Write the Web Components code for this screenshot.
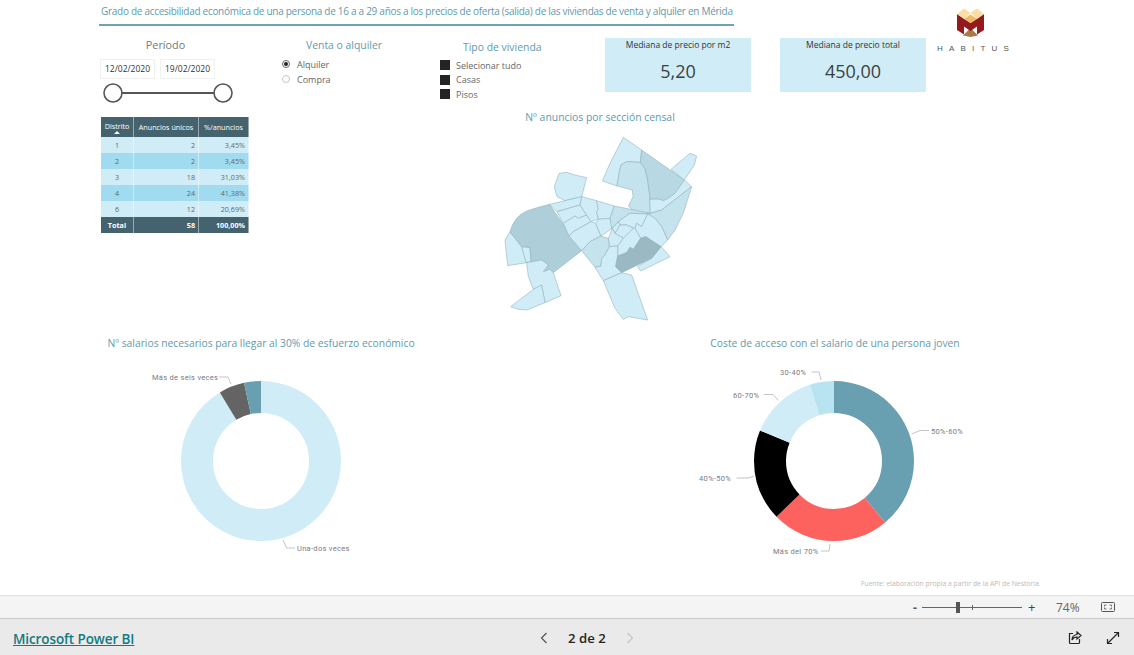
<!DOCTYPE html>
<html lang="es">
<head>
<meta charset="utf-8">
<title>Habitus</title>
<style>
  html, body { margin: 0; padding: 0; background: #fff; }
  body { font-family: "Open Sans", "Liberation Sans", sans-serif; width: 1134px; height: 655px; overflow: hidden; }
</style>
</head>
<body>
<report-page>
  <report-header slot="top"></report-header>
  <report-middle slot="middle"></report-middle>
  <report-charts slot="bottom"></report-charts>
</report-page>
<zoom-bar></zoom-bar>
<pbi-footer></pbi-footer>

<script>
class ReportPage extends HTMLElement {
  connectedCallback() {
    this.attachShadow({ mode: 'open' });
    this.shadowRoot.innerHTML = `
      <style>
        :host { display: flex; flex-direction: column; height: 595px; background: #fff; box-sizing: border-box; }
      </style>
      <slot name="top"></slot>
      <slot name="middle"></slot>
      <slot name="bottom"></slot>
    `;
  }
}

class ReportHeader extends HTMLElement {
  connectedCallback() {
    this.attachShadow({ mode: 'open' });
    this.shadowRoot.innerHTML = `
      <style>
        :host { display: flex; height: 110px; padding-left: 99px; box-sizing: border-box; }
        .left { width: 827px; }
        .title { width: 635px; height: 26px; box-sizing: border-box; border-bottom: 2px solid #6fa3b4; padding: 3px 0 0 2px; font-size: 10px; line-height: 16px; color: #5f9aad; letter-spacing: -0.285px; white-space: nowrap; }
        .controls { display: flex; align-items: flex-start; margin-top: 12px; }
        logo-habitus { margin: 8px 0 0 7px; }
      </style>
      <div class="left">
        <div class="title">Grado de accesibilidad económica de una persona de 16 a a 29 años a los precios de oferta (salida) de las viviendas de venta y alquiler en Mérida</div>
        <div class="controls">
          <period-slicer></period-slicer>
          <radio-slicer></radio-slicer>
          <check-slicer></check-slicer>
          <kpi-card label="Mediana de precio por m2" value="5,20"></kpi-card>
          <kpi-card label="Mediana de precio total" value="450,00" style="margin-left:29px"></kpi-card>
        </div>
      </div>
      <logo-habitus></logo-habitus>
    `;
  }
}

class PeriodSlicer extends HTMLElement {
  connectedCallback() {
    this.attachShadow({ mode: 'open' });
    this.shadowRoot.innerHTML = `
      <style>
        :host { display: block; width: 135px; margin-left: 1px; color: #666; }
        .head { text-align: center; font-size: 10.8px; line-height: 15px; color: #6f7c80; margin: -1px 4px 0 0; }
        .dates { display: flex; gap: 5px; margin-top: 7px; }
        .dates span { width: 55px; height: 20px; box-sizing: border-box; border: 1px solid #f1f1f1; font-size: 8.5px; line-height: 18px; color: #333; text-align: center; }
        svg { display: block; margin-top: 3px; margin-left: 3px; }
      </style>
      <div class="head">Período</div>
      <div class="dates"><span>12/02/2020</span><span>19/02/2020</span></div>
      <svg width="130" height="22" viewBox="0 0 130 22">
        <line x1="10" y1="11" x2="120" y2="11" stroke="#555" stroke-width="2"/>
        <circle cx="10" cy="11" r="9" fill="#fff" stroke="#555" stroke-width="1.6"/>
        <circle cx="120" cy="11" r="9" fill="#fff" stroke="#555" stroke-width="1.6"/>
      </svg>
    `;
  }
}

class RadioSlicer extends HTMLElement {
  connectedCallback() {
    this.attachShadow({ mode: 'open' });
    this.shadowRoot.innerHTML = `
      <style>
        :host { display: block; width: 157px; margin-left: 47px; }
        .head { font-size: 10.4px; line-height: 15px; color: #5f9aad; margin: 0 0 0 24px; white-space: nowrap; }
        .row { display: flex; align-items: center; height: 15px; font-size: 9px; color: #666; gap: 7px; }
        .rows { margin-top: 4px; }
        .dot { width: 8px; height: 8px; box-sizing: border-box; border: 1px solid #c6c6c6; border-radius: 50%; margin-top: -2px; position: relative; }
        .dot.on { border-color: #666; }
        .dot.on::after { content: ""; position: absolute; left: 1px; top: 1px; width: 4px; height: 4px; border-radius: 50%; background: #222; }
      </style>
      <div class="head">Venta o alquiler</div>
      <div class="rows">
        <div class="row"><i class="dot on"></i>Alquiler</div>
        <div class="row"><i class="dot"></i>Compra</div>
      </div>
    `;
  }
}

class CheckSlicer extends HTMLElement {
  connectedCallback() {
    this.attachShadow({ mode: 'open' });
    this.shadowRoot.innerHTML = `
      <style>
        :host { display: block; width: 165px; margin-left: 1px; }
        .head { font-size: 10.4px; line-height: 15px; color: #5f9aad; margin: 2px 0 0 23px; white-space: nowrap; }
        .rows { margin-top: 3px; }
        .row { display: flex; align-items: center; height: 14.5px; font-size: 9px; color: #666; gap: 6px; }
        b { width: 10px; height: 10px; background: #252423; display: block; }
      </style>
      <div class="head">Tipo de vivienda</div>
      <div class="rows">
        <div class="row"><b></b>Selecionar tudo</div>
        <div class="row"><b></b>Casas</div>
        <div class="row"><b></b>Pisos</div>
      </div>
    `;
  }
}

class KpiCard extends HTMLElement {
  connectedCallback() {
    this.attachShadow({ mode: 'open' });
    this.shadowRoot.innerHTML = `
      <style>
        :host { display: block; width: 146px; height: 54px; background: #d0edf7; text-align: center; color: #333; }
        .l { font-size: 8.5px; line-height: 14px; }
        .v { font-size: 18px; line-height: 26px; margin-top: 6px; color: #3a3f44; }
      </style>
      <div class="l">${this.getAttribute('label')}</div>
      <div class="v">${this.getAttribute('value')}</div>
    `;
  }
}

class LogoHabitus extends HTMLElement {
  connectedCallback() {
    this.attachShadow({ mode: 'open' });
    this.shadowRoot.innerHTML = `
      <style>
        :host { display: block; width: 82px; }
        svg { display: block; margin-left: 24px; }
        .t { font-family: "Liberation Sans", sans-serif; font-size: 8px; line-height: 10px; letter-spacing: 6.2px; color: #555; margin: 7px 0 0 1px; white-space: nowrap; padding-left: 3px; }
      </style>
      <svg width="27" height="29" viewBox="0 0 27 29">
        <polygon points="13.5,20 21,27.5 13.5,29 6,27.5" fill="#a9794c"/>
        <polygon points="0,6 13.5,15 27,6 27,22 20,26.5 20,18.5 13.5,23 7,18.5 7,26.5 0,22" fill="#96191d"/>
        <polygon points="0,6 7,.5 13.5,5 7,11" fill="#f9dfa3"/>
        <polygon points="13.5,5 20,.5 27,6 20,11" fill="#f9dfa3"/>
        <polygon points="7,11 13.5,6.5 20,11 13.5,15" fill="#f0b968"/>
      </svg>
      <div class="t">HABITUS</div>
    `;
  }
}

class ReportMiddle extends HTMLElement {
  connectedCallback() {
    this.attachShadow({ mode: 'open' });
    this.shadowRoot.innerHTML = `
      <style>
        :host { display: flex; height: 225px; padding: 7px 0 0 101px; box-sizing: border-box; }
        census-map { margin: 0 0 0 246px; }
      </style>
      <data-table></data-table>
      <census-map></census-map>
    `;
  }
}

class DataTable extends HTMLElement {
  connectedCallback() {
    const rows = [['1','2','3,45%'],['2','2','3,45%'],['3','18','31,03%'],['4','24','41,38%'],['6','12','20,69%']];
    this.attachShadow({ mode: 'open' });
    this.shadowRoot.innerHTML = `
      <style>
        :host { display: block; width: 148px; height: 116px; font-size: 7.2px; color: #666; }
        .g { display: grid; grid-template-columns: 33px 65px 50px; grid-template-rows: 20px repeat(5, 16px) 16px; }
        .g > div { box-sizing: border-box; padding: 0 3px; display: flex; align-items: center; justify-content: flex-end; white-space: nowrap; border-right: 1px solid rgba(255,255,255,.45); }
        .g > div:nth-child(3n+1) { justify-content: center; }
        .h { background: #44636f; color: #fff; }
        .h:nth-child(-n+3) { justify-content: center !important; line-height: 8px; }
        .d { flex-direction: column; padding-top: 2px !important; }
        .d::after { content: ""; border: 3px solid transparent; border-bottom: 3px solid #fff; border-top: 0; margin-top: 1px; }
        .a { background: #d0edf7; }
        .b { background: #a0dbef; }
        .t { background: #44636f; color: #fff; font-weight: 700; }
      </style>
      <div class="g">
        <div class="h d">Distrito</div><div class="h">Anuncios únicos</div><div class="h">%/anuncios</div>
        ${rows.map((r, i) => r.map(c => `<div class="${i % 2 ? 'b' : 'a'}">${c}</div>`).join('')).join('')}
        <div class="t">Total</div><div class="t">58</div><div class="t">100,00%</div>
      </div>
    `;
  }
}

class CensusMap extends HTMLElement {
  connectedCallback() {
    const L = '#d0edf7', M = '#c4e3ec', D = '#b8d9e3', W = '#aecfd9', K = '#9ab9c3';
    const shapes = [
      [L,'385,22 440,60 436,97 395,95 378,105 372,130 366,168 322,153 345,100'],
      [M,'436,97 395,95 378,105 372,130 366,168 412,180 414,200 400,228 420,245 466,250 464,200 458,150 450,115'],
      [D,'440,60 568,150 540,190 520,205 505,212 490,207 466,208 458,150 450,115 436,97'],
      [L,'528,118 585,70 605,78 598,105 568,150'],
      [L,'192,130 215,127 240,135 275,143 260,200 210,212 186,200 178,170'],
      [L,'466,250 464,208 490,207 505,212 520,205 540,190 568,150 590,170 500,240'],
      [L,'45,305 80,350 95,398 38,407 30,330'],
      [L,'80,350 105,352 108,395 93,397'],
      [W,'163,223 260,362 175,428 165,418 145,425 160,405 140,390 108,395 105,352 80,350 45,305 52,285 65,265 78,253 95,243 120,235'],
      [L,'95,398 140,390 160,405 145,425 165,418 175,428 198,497 150,518 140,465 115,478 100,440'],
      [L,'140,465 150,518 95,540 70,538 47,530 115,478'],
      [L,'163,223 210,212 260,200 255,225 186,245'],
      [L,'186,245 255,225 275,255 250,265 240,258 205,280'],
      [L,'205,280 240,258 250,265 275,255 288,275 235,305 222,318'],
      [L,'222,318 235,305 288,275 302,280 318,318 285,335 260,362'],
      [L,'260,200 305,212 310,240 305,245 310,268 288,275 275,255 255,225'],
      [L,'305,212 358,228 345,265 310,268 305,245 310,240'],
      [L,'310,268 345,265 352,295 318,318 302,280'],
      [M,'358,228 466,250 405,250 370,275 350,295 345,265'],
      [L,'405,250 458,252 440,290 425,280 420,295 395,285 375,285 370,275'],
      [L,'370,275 375,285 360,310 352,295'],
      [L,'375,285 395,285 415,295 385,325 360,310'],
      [L,'352,295 360,310 385,325 368,348 343,350 340,325'],
      [M,'318,318 340,325 343,350 330,375 320,385 318,408 300,412 260,362 285,335'],
      [M,'458,252 466,250 500,240 590,170 565,250 540,300 518,330 500,290 480,265'],
      [L,'420,295 425,280 440,290 458,252 480,265 500,290 518,330 498,350 452,320 437,325'],
      [L,'470,385 498,350 525,380 437,423 427,410'],
      [L,'415,295 420,295 437,325 415,358 405,352 395,368 368,378 368,348 385,325'],
      [L,'343,350 368,348 368,378 362,410 380,428 325,452 300,412 318,408 320,385 330,375'],
      [K,'452,320 498,350 470,385 380,428 362,410 368,378 395,368 405,352 415,358 437,325'],
      [L,'325,452 380,428 410,435 458,570 400,560 385,568 360,535']
    ];
    this.attachShadow({ mode: 'open' });
    this.shadowRoot.innerHTML = `
      <style>
        :host { display: block; width: 210px; }
        .head { text-align: center; font-size: 10.4px; line-height: 14px; color: #5f9aad; white-space: nowrap; margin-top: -7px; }
        svg { display: block; margin-top: 6px; }
      </style>
      <div class="head">Nº anuncios por sección censal</div>
      <svg width="210" height="195" viewBox="0 0 630 585">
        ${shapes.map(s => `<polygon points="${s[1]}" fill="${s[0]}" stroke="#8fb0bb" stroke-width="1.7" stroke-linejoin="round"/>`).join('')}
      </svg>
    `;
  }
}

class ReportCharts extends HTMLElement {
  connectedCallback() {
    this.attachShadow({ mode: 'open' });
    this.shadowRoot.innerHTML = `
      <style>
        :host { display: flex; flex-wrap: wrap; height: 260px; padding-left: 91px; box-sizing: border-box; }
        .foot { width: 100%; box-sizing: border-box; padding-left: 770px; font-size: 6.8px; line-height: 10px; color: #bdbab6; white-space: nowrap; margin-top: -14px; }
        donut-left { margin-right: 259px; }
      </style>
      <donut-left></donut-left>
      <donut-right></donut-right>
      <div class="foot">Fuente: elaboración propia a partir de  la API de Nestoria.</div>
    `;
  }
}

// dash segments on a circle with pathLength 360, angles clockwise from the top
const ring = (cx, cy, parts) => parts.map(([a, b, c]) =>
  `<circle cx="${cx}" cy="${cy}" r="64" fill="none" stroke="${c}" stroke-width="32" pathLength="360" stroke-dasharray="${b - a} ${360 - b + a}" stroke-dashoffset="${-a}" transform="rotate(-90 ${cx} ${cy})"/>`
).join('');

const chartCss = `
  :host { display: block; }
  .head { text-align: center; font-size: 10.3px; line-height: 14px; color: #5f9aad; white-space: nowrap; }
  svg { display: block; }
  text { font-family: Roboto, "Liberation Sans", sans-serif; font-size: 7.5px; letter-spacing: .3px; fill: #7d7a80; }
  polyline { fill: none; stroke: #c4c4c4; stroke-width: 1; }
`;

class DonutLeft extends HTMLElement {
  connectedCallback() {
    this.attachShadow({ mode: 'open' });
    this.shadowRoot.innerHTML = `
      <style>${chartCss} :host { width: 340px; padding-top: 1px; }</style>
      <div class="head">Nº salarios necesarios para llegar al 30% de esfuerzo económico</div>
      <svg width="340" height="240" viewBox="0 0 340 240">
        ${ring(170, 111, [[0, 329, '#d0edf7'], [329, 347.7, '#646464'], [347.7, 360, '#689fb1']])}
        <polyline points="128,27 137,27 140,34"/>
        <polyline points="192,190 195.7,198 204,198"/>
        <text x="61" y="30">Más de seis veces</text>
        <text x="206" y="201">Una-dos veces</text>
      </svg>
    `;
  }
}

class DonutRight extends HTMLElement {
  connectedCallback() {
    this.attachShadow({ mode: 'open' });
    this.shadowRoot.innerHTML = `
      <style>${chartCss} :host { width: 290px; padding-top: 1px; }</style>
      <div class="head">Coste de acceso con el salario de una persona joven</div>
      <svg width="290" height="240" viewBox="0 0 290 240">
        ${ring(144, 111, [[0, 140.3, '#689fb1'], [140.3, 225.9, '#fd625e'], [225.9, 292.4, '#000'], [292.4, 342.3, '#d0edf7'], [342.3, 360, '#b8e3f0']])}
        <polyline points="221.5,84 230,80.5 239,80.5"/>
        <polyline points="46.5,128 58,128 64,126"/>
        <polyline points="74,44.5 83,44.5 88.5,50.5"/>
        <polyline points="121.5,22 129,22 131,30"/>
        <polyline points="131,201 139,201 140,194"/>
        <text x="241" y="84">50%-60%</text>
        <text x="9" y="131">40%-50%</text>
        <text x="43" y="48">60-70%</text>
        <text x="90" y="25">30-40%</text>
        <text x="83" y="204">Más del 70%</text>
      </svg>
    `;
  }
}

class ZoomBar extends HTMLElement {
  connectedCallback() {
    this.attachShadow({ mode: 'open' });
    this.shadowRoot.innerHTML = `
      <style>
        :host { display: flex; align-items: center; height: 24px; box-sizing: border-box; border-top: 1px solid #e1e1e1; border-bottom: 1px solid #c8c8c8; background: #f4f4f4; color: #555; padding-left: 913px; font-size: 12px; }
        .minus { width: 9px; font-weight: 700; font-size: 12px; }
        .slider { position: relative; width: 100px; height: 1px; background: #666; }
        .slider::before { content: ""; position: absolute; left: 34px; top: -5px; width: 4px; height: 11px; background: #555; }
        .slider::after { content: ""; position: absolute; left: 50px; top: -2px; width: 1px; height: 5px; background: #666; }
        .plus { margin-left: 6px; font-size: 13px; width: 28px; color: #444; }
        .pct { width: 45px; font-size: 12px; color: #666; }
        svg { display: block; }
      </style>
      <span class="minus">-</span>
      <span class="slider"></span>
      <span class="plus">+</span>
      <span class="pct">74%</span>
      <svg width="14" height="10" viewBox="0 0 14 10" fill="none" stroke="#555">
        <rect x=".5" y=".5" width="13" height="9" rx="1"/>
        <path d="M3.5 4.5V3h2M8.5 3h2v1.5M10.5 5.5V7h-2M5.5 7h-2V5.5" stroke-width=".8"/>
      </svg>
    `;
  }
}

class PbiFooter extends HTMLElement {
  connectedCallback() {
    this.attachShadow({ mode: 'open' });
    this.shadowRoot.innerHTML = `
      <style>
        :host { display: flex; align-items: center; height: 36px; background: #eaeaea; padding: 3px 0 0 13px; box-sizing: border-box; }
        a { font-family: "Open Sans", sans-serif; font-size: 13.5px; font-weight: 600; color: #117a80; text-decoration: underline; letter-spacing: -.1px; width: 527px; white-space: nowrap; }
        .pager { display: flex; align-items: center; font-size: 13.2px; font-weight: 600; color: #252423; margin-top: -2px; }
        .pager span { margin: 0 20px; white-space: nowrap; }
        .icons { margin-left: auto; display: flex; gap: 24px; padding-right: 14px; margin-top: -1px; }
        svg { display: block; }
      </style>
      <a href="#">Microsoft Power BI</a>
      <div class="pager">
        <svg width="8" height="12" viewBox="0 0 8 12" fill="none" stroke="#555" stroke-width="1.2"><path d="M6.5 1 1.5 6l5 5"/></svg>
        <span>2 de 2</span>
        <svg width="8" height="12" viewBox="0 0 8 12" fill="none" stroke="#c4c4c4" stroke-width="1.2"><path d="M1.5 1l5 5-5 5"/></svg>
      </div>
      <div class="icons">
        <svg width="14" height="14" viewBox="0 0 14 14" fill="none" stroke="#252423" stroke-width="1.2">
          <path d="M5 2.5H1.5v9a1 1 0 0 0 1 1h8a1 1 0 0 0 1-1V8"/>
          <path d="M9 1l4 3.5L9 8V6C6.5 6 5 7 4 9c0-3 2-5 5-5.5z"/>
        </svg>
        <svg width="14" height="14" viewBox="0 0 14 14" fill="none" stroke="#252423" stroke-width="1.2">
          <path d="M1.5 12.5l11-11M8 1.5h4.5V6M1.5 8v4.5H6"/>
        </svg>
      </div>
    `;
  }
}

customElements.define('report-page', ReportPage);
customElements.define('report-header', ReportHeader);
customElements.define('period-slicer', PeriodSlicer);
customElements.define('radio-slicer', RadioSlicer);
customElements.define('check-slicer', CheckSlicer);
customElements.define('kpi-card', KpiCard);
customElements.define('logo-habitus', LogoHabitus);
customElements.define('report-middle', ReportMiddle);
customElements.define('data-table', DataTable);
customElements.define('census-map', CensusMap);
customElements.define('report-charts', ReportCharts);
customElements.define('donut-left', DonutLeft);
customElements.define('donut-right', DonutRight);
customElements.define('zoom-bar', ZoomBar);
customElements.define('pbi-footer', PbiFooter);
</script>
</body>
</html>
